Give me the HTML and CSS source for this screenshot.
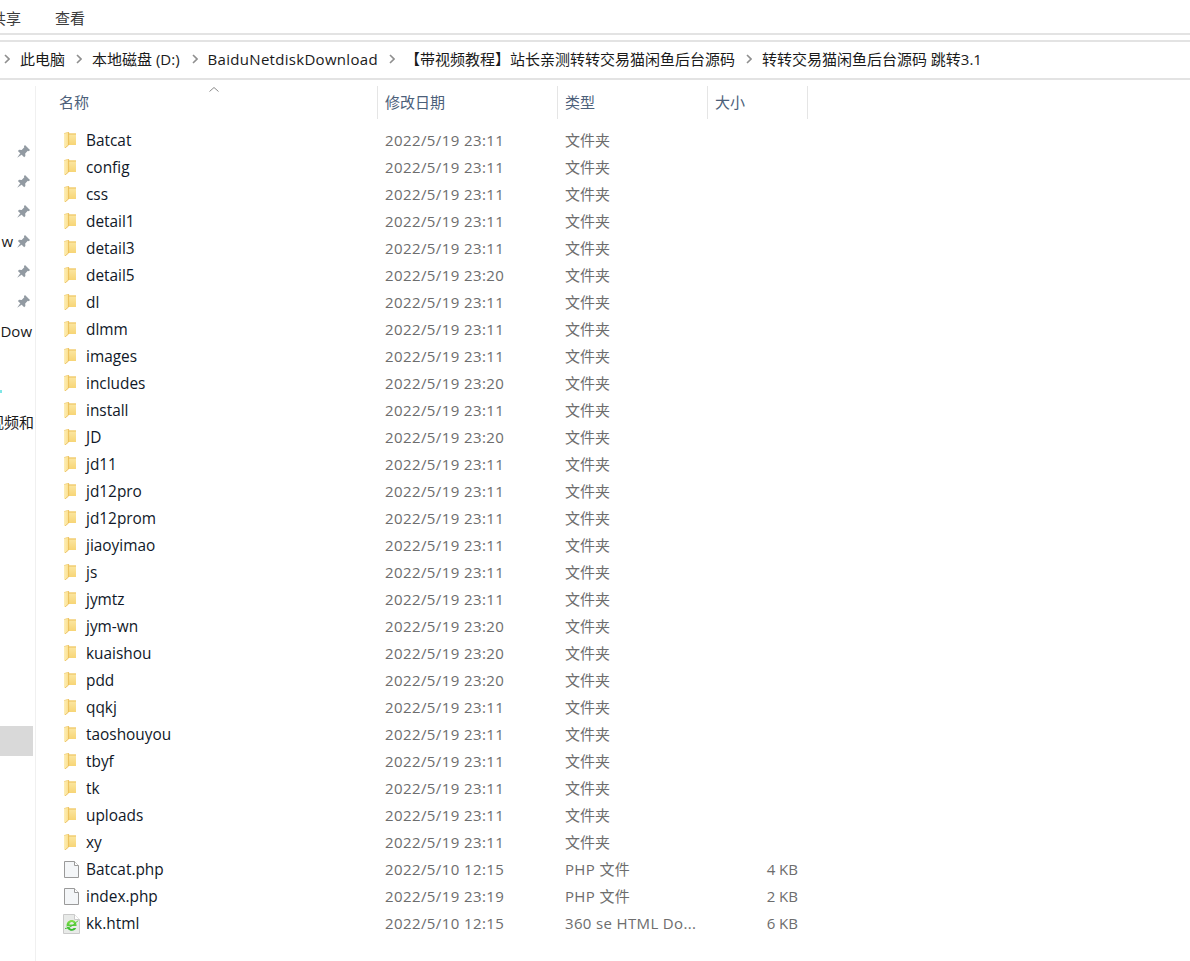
FILE: index.html
```html
<!DOCTYPE html>
<html lang="zh-CN">
<head>
<meta charset="utf-8">
<title>转转交易猫闲鱼后台源码 跳转3.1</title>
<link rel="stylesheet" href="styles.css">
</head>
<body>
<svg class="defs" width="0" height="0" aria-hidden="true">
  <defs>
    <linearGradient id="fg" x1="0" y1="0" x2="0" y2="1">
      <stop offset="0" stop-color="#fbe7a4"/>
      <stop offset="1" stop-color="#f7d576"/>
    </linearGradient>
    <linearGradient id="ff" x1="0" y1="0" x2="1" y2="0">
      <stop offset="0" stop-color="#fdeeb8"/>
      <stop offset="1" stop-color="#fbdf8c"/>
    </linearGradient>
    <linearGradient id="eg" x1="0" y1="0" x2="0" y2="1">
      <stop offset="0" stop-color="#86e24c"/>
      <stop offset="1" stop-color="#2db62a"/>
    </linearGradient>
    <symbol id="folder" viewBox="0 0 12 16">
      <path d="M4 1.5 H12 V13 H4 Z" fill="url(#fg)"/>
      <path d="M4 1.5 H12 V2.5 H4 Z" fill="#edc05b"/>
      <path d="M0 1.6 L4.6 0 V13 L1 16 L0 15.5 Z" fill="url(#ff)"/>
      <path d="M4.6 0 V13 L1 16" fill="none" stroke="#e7b64c" stroke-width="0.8"/>
      <path d="M0 1.6 L4.6 0" fill="none" stroke="#efc767" stroke-width="0.6"/>
    </symbol>
    <symbol id="file" viewBox="0 0 15 17">
      <path d="M0.5 0.5 H10.5 L14.5 4.5 V16.5 H0.5 Z" fill="#f4f6f8" stroke="#9a9a9a"/>
      <path d="M10.5 0.5 V4.5 H14.5" fill="#fff" stroke="#9a9a9a"/>
    </symbol>
    <symbol id="html" viewBox="0 0 17 20">
      <path d="M0.5 0.5 H11.5 L16.5 5.5 V19.5 H0.5 Z" fill="#e8eae8" stroke="#cacaca"/>
      <path d="M11.5 0.5 V5.5 H16.5" fill="#fff" stroke="#cacaca"/>
      <path fill-rule="evenodd" d="M4 12 H13.6 C13.7 8 11.4 6 8.8 6 C5.8 6 3.6 8.3 3.6 11.3 C3.6 14.5 5.8 16.8 8.8 16.8 C10.9 16.8 12.4 15.8 13.2 14 H10.6 C10.1 14.6 9.5 14.9 8.8 14.9 C7.4 14.9 6.5 14 6.3 12.8 H4 Z M6.3 10.4 C6.5 8.9 7.5 8 8.8 8 C10.1 8 11 8.9 11.1 10.4 Z" fill="url(#eg)"/>
      <path d="M2 14.5 C5 14.5 11.5 11 15 6.5" fill="none" stroke="#48c236" stroke-width="1"/>
    </symbol>
    <symbol id="pin" viewBox="0 0 13 13">
      <path d="M8 0 L13 5 L11.8 6.2 L10.8 5.8 L8.2 8.4 L8.4 11 L7.2 12.2 L0.9 5.9 L2.1 4.7 L4.7 4.9 L7.3 2.3 L6.9 1.2 Z" fill="#929aa2"/>
      <path d="M3.4 8 L0.2 12.8 L5 9.6 Z" fill="#929aa2"/>
    </symbol>
    <symbol id="chev" viewBox="0 0 6 10">
      <path d="M1 1 L5 5 L1 9" fill="none" stroke="#8f8f8f" stroke-width="1.6"/>
    </symbol>
  </defs>
</svg>

<header class="ribbon">
  <span class="tab tab-share">共享</span>
  <span class="tab">查看</span>
</header>

<nav class="address">
  <svg class="chev"><use href="#chev"/></svg>
  <span class="crumb">此电脑</span>
  <svg class="chev"><use href="#chev"/></svg>
  <span class="crumb crumb-disk">本地磁盘 (D:)</span>
  <svg class="chev"><use href="#chev"/></svg>
  <span class="crumb crumb-latin">BaiduNetdiskDownload</span>
  <svg class="chev"><use href="#chev"/></svg>
  <span class="crumb">【带视频教程】站长亲测转转交易猫闲鱼后台源码</span>
  <svg class="chev"><use href="#chev"/></svg>
  <span class="crumb">转转交易猫闲鱼后台源码 跳转3.1</span>
</nav>

<div class="explorer">
  <aside class="side">
    <div class="quick">
      <div class="qrow"><svg class="pin"><use href="#pin"/></svg></div>
      <div class="qrow"><svg class="pin"><use href="#pin"/></svg></div>
      <div class="qrow"><svg class="pin"><use href="#pin"/></svg></div>
      <div class="qrow"><span class="qtext qtext-pin">w</span><svg class="pin"><use href="#pin"/></svg></div>
      <div class="qrow"><svg class="pin"><use href="#pin"/></svg></div>
      <div class="qrow"><svg class="pin"><use href="#pin"/></svg></div>
      <div class="qrow"><span class="qtext">Dow</span></div>
      <div class="qrow"></div>
      <div class="qrow qrow-dot"><span class="dot"></span></div>
      <div class="qrow"><span class="qtext qtext-cut">视频和</span></div>
    </div>
    <div class="selected"></div>
  </aside>

  <main class="list">
    <div class="head">
      <div class="hcell hname">名称<svg class="sort" viewBox="0 0 10 5"><path d="M0.5 4.5 L5 0.5 L9.5 4.5" fill="none" stroke="#8b8b8b"/></svg></div>
      <div class="hcell">修改日期</div>
      <div class="hcell">类型</div>
      <div class="hcell">大小</div>
    </div>
    <div class="rows">
      <div class="row"><div class="name"><svg class="ico"><use href="#folder"/></svg>Batcat</div><div class="cell date">2022/5/19 23:11</div><div class="cell">文件夹</div><div class="cell size"></div></div>
      <div class="row"><div class="name"><svg class="ico"><use href="#folder"/></svg>config</div><div class="cell date">2022/5/19 23:11</div><div class="cell">文件夹</div><div class="cell size"></div></div>
      <div class="row"><div class="name"><svg class="ico"><use href="#folder"/></svg>css</div><div class="cell date">2022/5/19 23:11</div><div class="cell">文件夹</div><div class="cell size"></div></div>
      <div class="row"><div class="name"><svg class="ico"><use href="#folder"/></svg>detail1</div><div class="cell date">2022/5/19 23:11</div><div class="cell">文件夹</div><div class="cell size"></div></div>
      <div class="row"><div class="name"><svg class="ico"><use href="#folder"/></svg>detail3</div><div class="cell date">2022/5/19 23:11</div><div class="cell">文件夹</div><div class="cell size"></div></div>
      <div class="row"><div class="name"><svg class="ico"><use href="#folder"/></svg>detail5</div><div class="cell date">2022/5/19 23:20</div><div class="cell">文件夹</div><div class="cell size"></div></div>
      <div class="row"><div class="name"><svg class="ico"><use href="#folder"/></svg>dl</div><div class="cell date">2022/5/19 23:11</div><div class="cell">文件夹</div><div class="cell size"></div></div>
      <div class="row"><div class="name"><svg class="ico"><use href="#folder"/></svg>dlmm</div><div class="cell date">2022/5/19 23:11</div><div class="cell">文件夹</div><div class="cell size"></div></div>
      <div class="row"><div class="name"><svg class="ico"><use href="#folder"/></svg>images</div><div class="cell date">2022/5/19 23:11</div><div class="cell">文件夹</div><div class="cell size"></div></div>
      <div class="row"><div class="name"><svg class="ico"><use href="#folder"/></svg>includes</div><div class="cell date">2022/5/19 23:20</div><div class="cell">文件夹</div><div class="cell size"></div></div>
      <div class="row"><div class="name"><svg class="ico"><use href="#folder"/></svg>install</div><div class="cell date">2022/5/19 23:11</div><div class="cell">文件夹</div><div class="cell size"></div></div>
      <div class="row"><div class="name"><svg class="ico"><use href="#folder"/></svg>JD</div><div class="cell date">2022/5/19 23:20</div><div class="cell">文件夹</div><div class="cell size"></div></div>
      <div class="row"><div class="name"><svg class="ico"><use href="#folder"/></svg>jd11</div><div class="cell date">2022/5/19 23:11</div><div class="cell">文件夹</div><div class="cell size"></div></div>
      <div class="row"><div class="name"><svg class="ico"><use href="#folder"/></svg>jd12pro</div><div class="cell date">2022/5/19 23:11</div><div class="cell">文件夹</div><div class="cell size"></div></div>
      <div class="row"><div class="name"><svg class="ico"><use href="#folder"/></svg>jd12prom</div><div class="cell date">2022/5/19 23:11</div><div class="cell">文件夹</div><div class="cell size"></div></div>
      <div class="row"><div class="name"><svg class="ico"><use href="#folder"/></svg>jiaoyimao</div><div class="cell date">2022/5/19 23:11</div><div class="cell">文件夹</div><div class="cell size"></div></div>
      <div class="row"><div class="name"><svg class="ico"><use href="#folder"/></svg>js</div><div class="cell date">2022/5/19 23:11</div><div class="cell">文件夹</div><div class="cell size"></div></div>
      <div class="row"><div class="name"><svg class="ico"><use href="#folder"/></svg>jymtz</div><div class="cell date">2022/5/19 23:11</div><div class="cell">文件夹</div><div class="cell size"></div></div>
      <div class="row"><div class="name"><svg class="ico"><use href="#folder"/></svg>jym-wn</div><div class="cell date">2022/5/19 23:20</div><div class="cell">文件夹</div><div class="cell size"></div></div>
      <div class="row"><div class="name"><svg class="ico"><use href="#folder"/></svg>kuaishou</div><div class="cell date">2022/5/19 23:20</div><div class="cell">文件夹</div><div class="cell size"></div></div>
      <div class="row"><div class="name"><svg class="ico"><use href="#folder"/></svg>pdd</div><div class="cell date">2022/5/19 23:20</div><div class="cell">文件夹</div><div class="cell size"></div></div>
      <div class="row"><div class="name"><svg class="ico"><use href="#folder"/></svg>qqkj</div><div class="cell date">2022/5/19 23:11</div><div class="cell">文件夹</div><div class="cell size"></div></div>
      <div class="row"><div class="name"><svg class="ico"><use href="#folder"/></svg>taoshouyou</div><div class="cell date">2022/5/19 23:11</div><div class="cell">文件夹</div><div class="cell size"></div></div>
      <div class="row"><div class="name"><svg class="ico"><use href="#folder"/></svg>tbyf</div><div class="cell date">2022/5/19 23:11</div><div class="cell">文件夹</div><div class="cell size"></div></div>
      <div class="row"><div class="name"><svg class="ico"><use href="#folder"/></svg>tk</div><div class="cell date">2022/5/19 23:11</div><div class="cell">文件夹</div><div class="cell size"></div></div>
      <div class="row"><div class="name"><svg class="ico"><use href="#folder"/></svg>uploads</div><div class="cell date">2022/5/19 23:11</div><div class="cell">文件夹</div><div class="cell size"></div></div>
      <div class="row"><div class="name"><svg class="ico"><use href="#folder"/></svg>xy</div><div class="cell date">2022/5/19 23:11</div><div class="cell">文件夹</div><div class="cell size"></div></div>
      <div class="row"><div class="name"><svg class="ico ico-file"><use href="#file"/></svg>Batcat.php</div><div class="cell date">2022/5/10 12:15</div><div class="cell type-latin">PHP 文件</div><div class="cell size">4 KB</div></div>
      <div class="row"><div class="name"><svg class="ico ico-file"><use href="#file"/></svg>index.php</div><div class="cell date">2022/5/19 23:19</div><div class="cell type-latin">PHP 文件</div><div class="cell size">2 KB</div></div>
      <div class="row"><div class="name"><svg class="ico ico-html"><use href="#html"/></svg>kk.html</div><div class="cell date">2022/5/10 12:15</div><div class="cell type-latin">360 se HTML Do...</div><div class="cell size">6 KB</div></div>
    </div>
  </main>
</div>
</body>
</html>
```

FILE: styles.css
```css
* { box-sizing: border-box; }

html, body {
  margin: 0;
  height: 100%;
  overflow: hidden;
  background: #fff;
}

body {
  display: flex;
  flex-direction: column;
  font-family: "Open Sans", "Noto Sans CJK SC", sans-serif;
  font-size: 15px;
  color: #1a1a1a;
}

.defs { position: absolute; }

/* Ribbon */
.ribbon {
  height: 35px;
  flex: none;
  display: flex;
  align-items: center;
  gap: 34px;
  padding-top: 2px;
  margin-left: -9px;
  border-bottom: 2px solid #e3e3e3;
  color: #3c3c3c;
}

/* Address bar */
.address {
  flex: none;
  height: 40px;
  margin-top: 5px;
  display: flex;
  align-items: center;
  padding-left: 4px;
  padding-bottom: 3px;
  border-top: 2px solid #e3e3e3;
  border-bottom: 2px solid #e3e3e3;
  color: #1a1a1a;
}

.chev {
  width: 6px;
  height: 10px;
  flex: none;
  margin-right: 10px;
}

.crumb { margin-right: 11px; white-space: nowrap; }
.crumb-disk { margin-right: 12px; }
.crumb-latin { letter-spacing: 0.3px; }

/* Main split */
.explorer {
  flex: 1;
  display: flex;
  min-height: 0;
}

.side {
  width: 36px;
  flex: none;
  overflow: hidden;
  border-right: 1px solid #f0f0f0;
  margin-top: 6px;
  padding-top: 50px;
  display: flex;
  flex-direction: column;
}

.quick { flex: none; }

.qrow {
  height: 30px;
  width: 35px;
  display: flex;
  align-items: center;
  justify-content: flex-end;
  padding-right: 5px;
  white-space: nowrap;
}

.pin { width: 13px; height: 13px; margin-left: 3px; flex: none; }

.qtext { margin-right: -2px; }
.qtext-pin { margin-right: 1px; }
.qtext-cut { margin-right: -4px; }

.qrow-dot { justify-content: flex-start; }
.dot { width: 2px; height: 3px; background: #7fe6e6; }

.selected {
  width: 33px;
  height: 30px;
  margin-top: 290px;
  background: #d9d9d9;
}

/* File list */
.list { flex: 1; min-width: 0; }

.head {
  display: grid;
  grid-template-columns: 342px 180px 150px 100px;
  margin-top: 6px;
  height: 33px;
}

.hcell {
  display: flex;
  align-items: center;
  padding-left: 7px;
  padding-bottom: 2px;
  border-right: 1px solid #e5e5e5;
  color: #4c607a;
  position: relative;
}

.hname { padding-left: 23px; }

.sort {
  position: absolute;
  left: 173px;
  top: 1px;
  width: 10px;
  height: 5px;
}

.rows { padding-top: 8px; }

.row {
  display: grid;
  grid-template-columns: 342px 180px 150px 100px;
  height: 27px;
  align-items: center;
}

.name {
  display: flex;
  align-items: center;
  padding-left: 28px;
  font-size: 15.4px;
  color: #101828;
}

.ico {
  width: 12px;
  height: 16px;
  margin-right: 10px;
  margin-top: -2px;
  flex: none;
}

.ico-file { width: 15px; height: 17px; margin-right: 7px; margin-top: 0; }
.ico-html { width: 17px; height: 20px; margin-left: -1px; margin-right: 6px; margin-top: 0; }

.cell {
  padding-left: 7px;
  padding-bottom: 2px;
  color: #6d6d6d;
  white-space: nowrap;
}

.date { letter-spacing: 0.4px; }
.type-latin { letter-spacing: 0.35px; }

.size {
  text-align: right;
  padding-right: 10px;
}
```
